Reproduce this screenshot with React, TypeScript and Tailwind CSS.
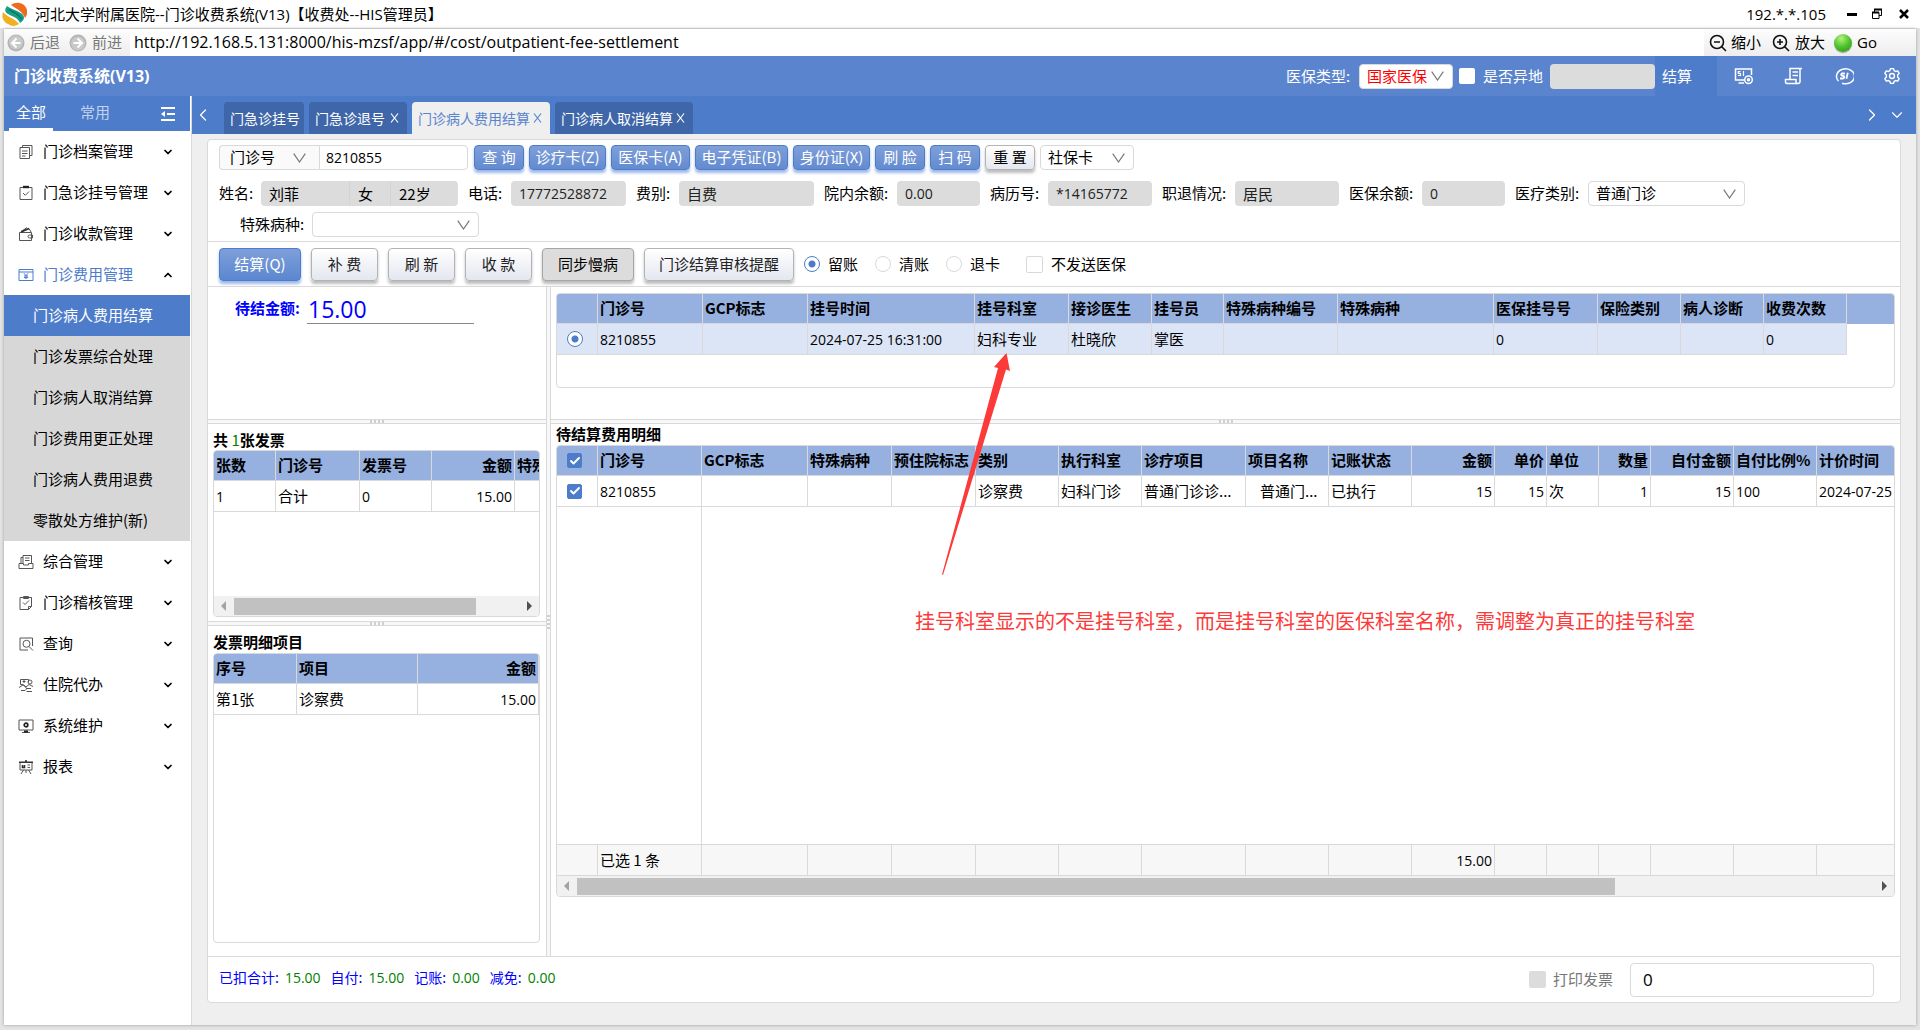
import { useState } from 'react'
import type { ReactNode } from 'react'
import clsx from 'clsx'
import { Check, ChevronDown, ChevronLeft, ChevronRight, ChevronUp } from 'lucide-react'

interface Column {
  title: ReactNode
  width: string
  value?: ReactNode
  right?: boolean
  total?: string
}

const num = "font-['Open_Sans','Noto_Sans_CJK_SC',sans-serif] text-[14px]"

function MenuIcon({ children }: { children: ReactNode }) {
  return (
    <svg viewBox="0 0 16 16" className="size-4 shrink-0" fill="none" stroke="currentColor" strokeWidth="1">
      {children}
    </svg>
  )
}

const icons: Record<string, ReactNode> = {
  archive: (
    <MenuIcon>
      <path d="M4.500 3.500v-2h9.500v10h-2M2 3.500h9.500v11H2zM4 7h5.500M4 9.500h5.500M4 12h3.500" />
    </MenuIcon>
  ),
  clipboard: (
    <MenuIcon>
      <path d="M2 2.500h12v12H2zM5 8l2.300 2.300L11 6.500" />
      <path d="M5 2h6" strokeWidth="2.400" stroke="#222" />
    </MenuIcon>
  ),
  wallet: (
    <MenuIcon>
      <path d="M1.500 6.500h12v8h-12zM3 6l8-3.500L13 6M4 5l5-3.500M14.500 9h-3a1.500 1.500 0 0 0 0 3h3z" />
      <path d="M3 5.800 11 2.500" strokeWidth="1.800" stroke="#333" />
    </MenuIcon>
  ),
  fee: (
    <MenuIcon>
      <path d="M1 2.500h14v11H1zM1 5h14M6 6.300l2 2.400 2-2.400M8 8.700V12M6 9h4M6 10.600h4" />
    </MenuIcon>
  ),
  tray: (
    <MenuIcon>
      <path d="M5 9V1.500h8.500V9M3 9V3.500h2M1 9.500h4.500v1.500h5V9.500H15v5H1zM7 4h4.500M7 6.500h4.500" />
    </MenuIcon>
  ),
  audit: (
    <MenuIcon>
      <path d="M2 2.500h11.500v9l-3 3H2zM10.500 14.500v-3h3M5 7.500l2 2 4-4" />
      <path d="M5.500 1.500h5v2h-5z" />
    </MenuIcon>
  ),
  search: (
    <MenuIcon>
      <path d="M10 14H2V2h12.500v8" />
      <circle cx="8.500" cy="7.800" r="3.500" />
      <path d="m11 10.500 4 4" />
    </MenuIcon>
  ),
  agent: (
    <MenuIcon>
      <path d="M2.500 2.500h8v3M2.500 2.500v5h3M4.500 4.500h3M6 3v3" />
      <circle cx="12" cy="5" r="2" />
      <path d="M1 10.500 5 8l3 2 3-2.500 4 2M3 13.500h4l2-2h4M6 8l3 4M8.500 14.500h5.500" />
    </MenuIcon>
  ),
  system: (
    <MenuIcon>
      <path d="M1 2h14v10H1zM4 14.500h8" />
      <circle cx="8" cy="7" r="1.800" strokeWidth="1.700" stroke="#222" />
      <path d="M6 13.500h4" strokeWidth="2" stroke="#222" />
    </MenuIcon>
  ),
  report: (
    <MenuIcon>
      <path d="M2 3.500h12v7.500H2zM5.500 11 3 15M10.500 11l2.500 4M8 11v3M9.500 6h2.500M9.500 8.500h2.500" />
      <path d="M1 3.200h14M8 1v2M4.500 6v2.500h2V6" strokeWidth="1.600" stroke="#333" />
    </MenuIcon>
  ),
}

const menu = [
  { label: '门诊档案管理', icon: 'archive' },
  { label: '门急诊挂号管理', icon: 'clipboard' },
  { label: '门诊收款管理', icon: 'wallet' },
  {
    label: '门诊费用管理',
    icon: 'fee',
    children: [
      '门诊病人费用结算',
      '门诊发票综合处理',
      '门诊病人取消结算',
      '门诊费用更正处理',
      '门诊病人费用退费',
      '零散处方维护(新)',
    ],
  },
  { label: '综合管理', icon: 'tray' },
  { label: '门诊稽核管理', icon: 'audit' },
  { label: '查询', icon: 'search' },
  { label: '住院代办', icon: 'agent' },
  { label: '系统维护', icon: 'system' },
  { label: '报表', icon: 'report' },
]

const tabs = [
  { label: '门急诊挂号', width: 'w-[80px]', closable: false },
  { label: '门急诊退号', width: 'w-[98px]', closable: true },
  { label: '门诊病人费用结算', width: 'w-[138px]', closable: true },
  { label: '门诊病人取消结算', width: 'w-[138px]', closable: true },
]

const registerColumns: Column[] = [
  { title: '', width: 'w-[41px]', value: <Radio name="register" label="选择 8210855" defaultChecked /> },
  { title: '门诊号', width: 'w-[105px]', value: <span className={num}>8210855</span> },
  { title: 'GCP标志', width: 'w-[105px]' },
  { title: '挂号时间', width: 'w-[167px]', value: <span className={num}>2024-07-25 16:31:00</span> },
  { title: '挂号科室', width: 'w-[94px]', value: '妇科专业' },
  { title: '接诊医生', width: 'w-[83px]', value: '杜晓欣' },
  { title: '挂号员', width: 'w-[72px]', value: '掌医' },
  { title: '特殊病种编号', width: 'w-[114px]' },
  { title: '特殊病种', width: 'w-[156px]' },
  { title: '医保挂号号', width: 'w-[104px]', value: <span className={num}>0</span> },
  { title: '保险类别', width: 'w-[83px]' },
  { title: '病人诊断', width: 'w-[83px]' },
  { title: '收费次数', width: 'w-[83px]', value: <span className={num}>0</span> },
]

const detailColumns: Column[] = [
  { title: <Tick label="全选" />, width: 'w-[41px]', value: <Tick label="选择明细" /> },
  { title: '门诊号', width: 'w-[104px]', value: <span className={num}>8210855</span>, total: '已选 1 条' },
  { title: 'GCP标志', width: 'w-[106px]' },
  { title: '特殊病种', width: 'w-[84px]' },
  { title: '预住院标志', width: 'w-[84px]' },
  { title: '类别', width: 'w-[83px]', value: '诊察费' },
  { title: '执行科室', width: 'w-[83px]', value: '妇科门诊' },
  { title: '诊疗项目', width: 'w-[104px]', value: '普通门诊诊...' },
  { title: '项目名称', width: 'w-[83px]', value: <span className="pl-3">普通门...</span> },
  { title: '记账状态', width: 'w-[83px]', value: '已执行' },
  { title: '金额', width: 'w-[83px]', value: <span className={num}>15</span>, right: true, total: '15.00' },
  { title: '单价', width: 'w-[52px]', value: <span className={num}>15</span>, right: true },
  { title: '单位', width: 'w-[52px]', value: '次' },
  { title: '数量', width: 'w-[52px]', value: <span className={num}>1</span>, right: true },
  { title: '自付金额', width: 'w-[83px]', value: <span className={num}>15</span>, right: true },
  { title: '自付比例%', width: 'w-[83px]', value: <span className={num}>100</span> },
  { title: '计价时间', width: 'w-[156px]', value: <span className={num}>2024-07-25</span> },
]

const invoiceColumns: Column[] = [
  { title: '张数', width: 'w-[62px]', value: <span className={num}>1</span> },
  { title: '门诊号', width: 'w-[84px]', value: '合计' },
  { title: '发票号', width: 'w-[72px]', value: <span className={num}>0</span> },
  { title: '金额', width: 'w-[83px]', value: <span className={num}>15.00</span>, right: true },
  { title: '特殊病种', width: 'w-[90px]' },
]

const itemColumns: Column[] = [
  { title: '序号', width: 'w-[83px]', value: '第1张' },
  { title: '项目', width: 'w-[121px]', value: '诊察费' },
  { title: '金额', width: 'w-[121px]', value: <span className={num}>15.00</span>, right: true },
]

function Radio({ name, label, defaultChecked }: { name: string; label?: string; defaultChecked?: boolean }) {
  return (
    <input
      type="radio"
      name={name}
      aria-label={label}
      defaultChecked={defaultChecked}
      className="block size-4 shrink-0 appearance-none rounded-full border border-[#d9d9d9] bg-white checked:border-[#4d7cca] checked:bg-[radial-gradient(circle,#4d7cca_3px,white_4px)]"
    />
  )
}

function Tick({ label }: { label: string }) {
  return (
    <span className="relative block size-[15px]">
      <input
        type="checkbox"
        aria-label={label}
        defaultChecked
        className="peer block size-[15px] appearance-none rounded-xs border border-[#d9d9d9] bg-white checked:border-[#4d7cca] checked:bg-[#4d7cca]"
      />
      <Check
        className="pointer-events-none absolute inset-0 m-auto hidden size-3 text-white peer-checked:block"
        strokeWidth={4}
      />
    </span>
  )
}

function Chevron({ className }: { className?: string }) {
  return (
    <svg
      viewBox="0 0 13 10"
      className={clsx('pointer-events-none absolute inset-y-0 my-auto h-[10px] w-[13px] text-[#777]', className)}
      fill="none"
      stroke="currentColor"
      strokeWidth="1.2"
    >
      <path d="M.7.7 6.500 9 12.300.7" />
    </svg>
  )
}

interface PickProps {
  id: string
  label?: string
  value: string
  className?: string
  boxClass?: string
  chevronClass?: string
}

function Pick({ id, label, value, className, boxClass = 'rounded bg-white pl-[7px]', chevronClass = 'right-[9px]' }: PickProps) {
  return (
    <span className={clsx('relative block h-[25px] shrink-0', className)}>
      <select
        id={id}
        aria-label={label}
        className={clsx('h-full w-full appearance-none border border-[#d9d9d9] outline-none', boxClass)}
      >
        <option>{value}</option>
      </select>
      <Chevron className={chevronClass} />
    </span>
  )
}

function Field({ id, label, value, labelWidth, width }: Record<'id' | 'label' | 'value' | 'labelWidth' | 'width', string>) {
  return (
    <div className="flex shrink-0 items-center">
      <label htmlFor={id} className={clsx('shrink-0', labelWidth)}>
        {label}:
      </label>
      <input
        id={id}
        readOnly
        defaultValue={value}
        className={clsx('h-[25px] rounded bg-[#dcdcdc] px-2 text-[#222] outline-none', width, /^[\d*.]+$/.test(value) && num)}
      />
    </div>
  )
}

function QueryButton({ children, width, plain }: { children: ReactNode; width: string; plain?: boolean }) {
  return (
    <button
      className={clsx(
        'flex h-[25px] shrink-0 items-center justify-center rounded border whitespace-nowrap',
        width,
        plain
          ? 'border-[#b3b3b3] bg-linear-to-b from-white to-[#e4e7f0] shadow-[0_3px_3px_#bdbdbd]'
          : 'border-[#4d7cca] bg-linear-to-b from-[#7f9fd9] to-[#638bd0] text-white shadow-[0_3px_3px_#9db9ea]',
      )}
    >
      {children}
    </button>
  )
}

const actionTones = {
  primary: 'border-[#4d7cca] bg-linear-to-b from-[#7f9fd9] to-[#5b87d0] text-white shadow-[0_3px_3px_#9db9ea]',
  plain: 'border-[#b3b3b3] bg-linear-to-b from-white to-[#e4e7f0] text-[#222] shadow-[0_3px_3px_#bdbdbd]',
  gray: 'border-[#a6a6a6] bg-[#dcdcdc] text-black shadow-[0_3px_3px_#bdbdbd]',
}

function ActionButton({ children, width, tone = 'plain' }: { children: ReactNode; width: string; tone?: keyof typeof actionTones }) {
  return (
    <button
      className={clsx(
        'flex h-[33px] shrink-0 items-center justify-center rounded border whitespace-nowrap',
        width,
        actionTones[tone],
      )}
    >
      {children}
    </button>
  )
}

function DataTable({ columns, selected }: { columns: Column[]; selected?: boolean }) {
  return (
    <table className="w-0 table-fixed border-separate border-spacing-0">
      <thead>
        <tr className="h-[30px] bg-[#96b1e0]">
          {columns.map((col, i) => (
            <th
              key={i}
              className={clsx(
                'overflow-hidden border-r border-b border-[#d9d9d9] font-bold whitespace-nowrap',
                col.width,
                col.right ? 'pr-[2px] text-right' : 'pl-[2px] text-left',
              )}
            >
              {typeof col.title === 'string' ? col.title : <div className="pl-2">{col.title}</div>}
            </th>
          ))}
        </tr>
      </thead>
      <tbody>
        <tr className={clsx('h-[31px]', selected ? 'bg-[#dbe5f6]' : 'bg-white')}>
          {columns.map((col, i) => (
            <td
              key={i}
              className={clsx(
                'overflow-hidden border-r border-b border-[#d9d9d9] whitespace-nowrap',
                col.right ? 'pr-[2px] text-right' : 'pl-[2px] text-left',
              )}
            >
              {col.width === 'w-[41px]' ? <div className="pl-2">{col.value}</div> : col.value}
            </td>
          ))}
        </tr>
      </tbody>
    </table>
  )
}

function ScrollBar({ thumb }: { thumb: string }) {
  return (
    <div className="flex h-5 shrink-0 items-center bg-[#f1f1f1] px-[7px]">
      <span className="border-y-[5px] border-r-[5px] border-y-transparent border-r-[#a3a3a3]" />
      <div className="flex-1 px-2">
        <div className={clsx('h-[17px] bg-[#c1c1c1]', thumb)} />
      </div>
      <span className="border-y-[5px] border-l-[5px] border-y-transparent border-l-[#505050]" />
    </div>
  )
}

function Splitter({ vertical }: { vertical?: boolean }) {
  return (
    <div
      className={clsx(
        'flex shrink-0 items-center justify-center gap-[2px] border-[#d9d9d9] bg-[#f8f8f8]',
        vertical ? 'w-[5px] flex-col border-x' : 'h-[5px] border-y',
      )}
    >
      {[0, 1, 2, 3].map((i) => (
        <span key={i} className={clsx('bg-[#d0d0d0]', vertical ? 'h-[2px] w-[3px]' : 'h-[3px] w-[2px]')} />
      ))}
    </div>
  )
}

function TitleBar() {
  return (
    <header className="flex h-[29px] shrink-0 items-center border-b border-[#e3e3e3] bg-white pr-2.5 pl-px font-['Open_Sans','Noto_Sans_CJK_SC',sans-serif]">
      <svg viewBox="0 0 26 24" className="h-6 w-[26px] shrink-0">
        <path d="M10 3c4-3 10-3 14 1 3 4 3 8 0 12-2-6-8-9-14-13z" fill="#ee6a20" />
        <path d="M6 4C3 8 4 10.500 8 12.500c5 2.500 9 3.500 11 8.500 4-3 5-5 3-8C19 9 10 7.500 6 4z" fill="#12a086" />
        <path d="M8 7.500c4 3 11 4.500 12.500 10" fill="none" stroke="#0c7466" strokeWidth="1.500" />
        <path d="M2 10c-2 6 1 10 5 12 4 3 8 2 11 0-3-5-12-7-16-12z" fill="#efb024" />
      </svg>
      <h1 className="ml-2 text-[15px]">河北大学附属医院--门诊收费系统(V13)【收费处--HIS管理员】</h1>
      <span className="ml-auto text-[15px]">192.*.*.105</span>
      <button aria-label="最小化" className="ml-[21px] flex h-4 w-[10px] items-center">
        <span className="h-[3px] w-full bg-black" />
      </button>
      <button aria-label="还原" className="ml-[14px] w-3">
        <svg viewBox="0 0 12 12" className="size-3" fill="none" stroke="#000">
          <path d="M3.500 4V1.500h7v6H8" />
          <path d="M1.500 4.500H8v6H1.500z" />
          <path d="M3 1.500h8M1 4.500h7" strokeWidth="2" />
        </svg>
      </button>
      <button aria-label="关闭" className="ml-[15px] w-3">
        <svg viewBox="0 0 12 12" className="size-3" stroke="#000" strokeWidth="2.500">
          <path d="m2 2 8 8M10 2l-8 8" />
        </svg>
      </button>
    </header>
  )
}

function RoundArrow({ flip }: { flip?: boolean }) {
  return (
    <svg viewBox="0 0 18 18" className={clsx('size-[18px]', flip && 'rotate-180')}>
      <circle cx="9" cy="9" r="8.500" fill="#b4b4b4" />
      <circle cx="9" cy="8.500" r="7" fill="#c9c9c9" />
      <path d="M9.500 4.500 5 9l4.500 4.500M5 9h8.500" fill="none" stroke="#fff" strokeWidth="2" />
    </svg>
  )
}

function Magnifier({ plus }: { plus?: boolean }) {
  return (
    <svg viewBox="0 0 18 18" className="size-[18px]" fill="none" stroke="#111" strokeWidth="1.600">
      <circle cx="8" cy="8" r="6.500" />
      <path d="m12.500 12.500 4.500 4.500M5 8h6" />
      {plus && <path d="M8 5v6" />}
    </svg>
  )
}

function AddressBar() {
  return (
    <div className="flex h-[27px] shrink-0 items-center bg-white text-[15px]">
      <div className="flex h-full items-center bg-linear-to-b from-[#fdfdfd] to-[#ededed] pr-2 pl-[3px] text-[#777]">
        <button className="flex items-center gap-[5px]">
          <RoundArrow />
          后退
        </button>
        <button className="ml-[9px] flex items-center gap-[5px]">
          <RoundArrow flip />
          前进
        </button>
      </div>
      <input
        aria-label="地址"
        defaultValue="http://192.168.5.131:8000/his-mzsf/app/#/cost/outpatient-fee-settlement"
        className="h-full min-w-0 flex-1 px-1 pb-[2px] font-['Open_Sans',sans-serif] text-[16px] outline-none"
      />
      <div className="flex h-full w-[212px] shrink-0 items-center bg-linear-to-b from-[#fdfdfd] to-[#ededed] pl-[5px]">
        <button className="flex items-center gap-1">
          <Magnifier />
          缩小
        </button>
        <button className="ml-[11px] flex items-center gap-[5px]">
          <Magnifier plus />
          放大
        </button>
        <button className="ml-[9px] flex items-center gap-[5px] font-['Open_Sans',sans-serif]">
          <span className="size-[18px] rounded-full bg-[radial-gradient(circle_at_40%_25%,#b5f07c,#4bc22c_50%,#2d8a17)] shadow-[0_1px_1px_#999]" />
          Go
        </button>
      </div>
    </div>
  )
}

function AppHeader() {
  return (
    <div className="flex h-10 shrink-0 items-center bg-[#5a85ce] text-[15px] text-white">
      <h2 className="pl-[10px] font-['Open_Sans','Noto_Sans_CJK_SC',sans-serif] text-[16px] font-bold">
        门诊收费系统(V13)
      </h2>
      <label htmlFor="insurance" className="ml-auto w-[73px]">
        医保类型:
      </label>
      <Pick id="insurance" value="国家医保" className="w-[94px] text-[#f00]" />
      <input
        id="remote"
        type="checkbox"
        className="ml-[6px] size-4 appearance-none rounded-xs bg-white checked:bg-[#9db9ea]"
      />
      <label htmlFor="remote" className="ml-2">
        是否异地
      </label>
      <input aria-label="异地地区" readOnly className="ml-[7px] h-[25px] w-[105px] rounded bg-[#dcdcdc]" />
      <button className="h-full w-[62px] bg-[#4d7cca] pl-[7px] text-left">结算</button>
      <div className="flex items-center gap-[30px] pr-4 pl-[17px]">
        <button aria-label="医保目录">
          <svg viewBox="0 0 20 20" className="size-5" fill="none" stroke="#fff" strokeWidth="1.500">
            <path d="M10 14H1.500V3h16v6M4.500 17H10" />
            <path d="M6.500 5.700H4.300v1.800h2.200v2H4M9.500 5v5" strokeWidth="1.200" />
            <circle cx="14.500" cy="13.800" r="3.800" />
            <circle cx="14.500" cy="13.800" r="1" />
          </svg>
        </button>
        <button aria-label="票据">
          <svg viewBox="0 0 20 20" className="size-5" fill="none" stroke="#fff" strokeWidth="1.500">
            <path d="M6 13V2.500h12M16 2.500V16a2 2 0 0 1-2 1.500H3a1.500 1.500 0 0 1-1.500-1.500v-2.500H12V16a2 2 0 0 0 2 1.500M8.500 6H14M8.500 9.500H14" />
          </svg>
        </button>
        <button aria-label="医保">
          <svg viewBox="0 0 20 20" className="size-5" fill="none" stroke="#fff" strokeWidth="1.500">
            <path d="M4.500 15A9 7.500 0 1 1 8 17.200" />
            <path d="M10.800 7.500H8.300c-1.300 0-1.600 2 0 2.300h1c1.500.3 1 2.700-.5 2.700H6M13.800 6.800l-1.400 6" strokeWidth="1.800" />
          </svg>
        </button>
        <button aria-label="设置">
          <svg viewBox="1.500 1.500 17 17" className="size-4" fill="none" stroke="#fff" strokeWidth="1.500" strokeLinejoin="round">
            <path d="M8.500 2h3l.7 2.300 1.600.9 2.300-.6 1.500 2.600L16 9v2l1.600 1.800-1.500 2.600-2.300-.6-1.600.9-.7 2.300h-3l-.7-2.300-1.600-.9-2.300.6-1.500-2.600L4 11V9L2.400 7.200l1.500-2.600 2.300.6 1.600-.9z" />
            <circle cx="10" cy="10" r="2.600" />
          </svg>
        </button>
      </div>
    </div>
  )
}

function Sidebar() {
  const [open, setOpen] = useState('门诊费用管理')

  return (
    <aside className="flex w-[188px] shrink-0 flex-col border-r border-[#d9d9d9] bg-white pr-px text-[15px]">
      <div className="flex h-[35px] shrink-0 bg-[#4d7cca] pl-[5px] text-white">
        <button className="w-11 border-b-[3px] border-white">全部</button>
        <button className="ml-5 w-11 border-b-[3px] border-transparent text-[#c3d3ee]">常用</button>
        <button aria-label="收起菜单" className="mr-[14px] ml-auto">
          <svg viewBox="0 0 16 14" className="h-[14px] w-4" stroke="#fff" strokeWidth="2">
            <path d="M1 1h14M7 7h8M1 13h14" />
            <path d="M5 4 1 7l4 3z" fill="#fff" stroke="none" />
          </svg>
        </button>
      </div>
      <nav>
        {menu.map((item) => {
          const active = !!item.children && open === item.label
          return (
            <div key={item.label}>
              <button
                onClick={() => setOpen(active ? '' : item.label)}
                className={clsx('flex h-[41px] w-full items-center pr-4 pl-[14px]', active ? 'text-[#4d7cca]' : 'text-black')}
              >
                <span className={active ? '' : 'text-[#555]'}>{icons[item.icon]}</span>
                <span className="ml-[9px]">{item.label}</span>
                {active ? (
                  <ChevronUp className="ml-auto size-3 text-black" strokeWidth={3.5} />
                ) : (
                  <ChevronDown className="ml-auto size-3 text-black" strokeWidth={3.5} />
                )}
              </button>
              {active && (
                <div className="bg-[#d7d7d7]">
                  {item.children?.map((child, i) => (
                    <button
                      key={child}
                      className={clsx('block h-[41px] w-full pl-[29px] text-left', i === 0 && 'bg-[#4d7cca] text-white')}
                    >
                      {child}
                    </button>
                  ))}
                </div>
              )}
            </div>
          )
        })}
      </nav>
    </aside>
  )
}

function TabBar() {
  return (
    <div className="flex h-[38px] shrink-0 items-end bg-[#4d7cca] text-[14px] text-white">
      <button aria-label="向左" className="mr-[11px] ml-px flex h-[38px] w-5 items-center justify-center">
        <ChevronLeft className="size-5" strokeWidth={1.5} />
      </button>
      <div className="flex gap-[5px]">
        {tabs.map((tab, i) => (
          <button
            key={tab.label}
            className={clsx(
              'flex h-8 items-center justify-between rounded-t px-[6px] whitespace-nowrap',
              tab.width,
              i === 2 ? 'bg-[#efefef] text-[#5a85ce]' : 'bg-[#3e66a8]',
            )}
          >
            {tab.label}
            {tab.closable && (
              <svg viewBox="0 0 9 10" className="mr-[2px] h-[10px] w-[9px]" stroke="currentColor" strokeWidth="1.200">
                <path d="m1 .5 7 9M8 .5l-7 9" />
              </svg>
            )}
          </button>
        ))}
      </div>
      <div className="ml-auto flex h-[38px] items-center gap-[6px] pr-[10px]">
        <ChevronRight className="size-5" strokeWidth={1.5} />
        <ChevronDown className="size-[18px]" strokeWidth={1.5} />
      </div>
    </div>
  )
}

function QueryForm() {
  return (
    <form className="shrink-0 border-b border-[#d9d9d9] pt-[5px] pb-1 pl-[11px]" onSubmit={(e) => e.preventDefault()}>
      <div className="flex items-center gap-[5px]">
        <div className="mr-px flex">
          <Pick
            id="cardKind"
            label="号码类型"
            value="门诊号"
            className="w-[100px]"
            boxClass="rounded-l border-r-0 bg-[#fafafa] pl-[10px]"
            chevronClass="right-[13px]"
          />
          <input
            aria-label="门诊号"
            defaultValue="8210855"
            className={clsx('h-[25px] w-[149px] rounded-r border border-[#d9d9d9] px-[6px] outline-none', num)}
          />
        </div>
        <QueryButton width="w-[50px]">查 询</QueryButton>
        <QueryButton width="w-[77px]">诊疗卡(Z)</QueryButton>
        <QueryButton width="w-[79px]">医保卡(A)</QueryButton>
        <QueryButton width="w-[93px]">电子凭证(B)</QueryButton>
        <QueryButton width="w-[77px]">身份证(X)</QueryButton>
        <QueryButton width="w-[50px]">刷 脸</QueryButton>
        <QueryButton width="w-[50px]">扫 码</QueryButton>
        <QueryButton width="w-[50px]" plain>
          重 置
        </QueryButton>
        <Pick id="social" label="卡类型" value="社保卡" className="w-[94px]" />
      </div>
      <div className="mt-[11px] flex items-center gap-[10px]">
        <div className="flex items-center">
          <label htmlFor="name" className="w-[42px]">
            姓名:
          </label>
          <div className="flex divide-x divide-[#d4d4d4] overflow-hidden rounded bg-[#dcdcdc]">
            <input id="name" readOnly defaultValue="刘菲" className="h-[25px] w-[89px] px-2 outline-none" />
            <input aria-label="性别" readOnly defaultValue="女" className="h-[25px] w-[41px] px-2 outline-none" />
            <input aria-label="年龄" readOnly defaultValue="22岁" className="h-[25px] w-[67px] px-2 outline-none" />
          </div>
        </div>
        <Field id="phone" label="电话" value="17772528872" labelWidth="w-[43px]" width="w-[115px]" />
        <Field id="feeKind" label="费别" value="自费" labelWidth="w-[43px]" width="w-[135px]" />
        <Field id="balance" label="院内余额" value="0.00" labelWidth="w-[73px]" width="w-[83px]" />
        <Field id="record" label="病历号" value="*14165772" labelWidth="w-[58px]" width="w-[104px]" />
        <Field id="retire" label="职退情况" value="居民" labelWidth="w-[73px]" width="w-[104px]" />
        <Field id="siBalance" label="医保余额" value="0" labelWidth="w-[73px]" width="w-[83px]" />
        <div className="flex items-center">
          <label htmlFor="medical" className="w-[73px]">
            医疗类别:
          </label>
          <Pick id="medical" value="普通门诊" className="w-[157px]" />
        </div>
      </div>
      <div className="mt-[6px] ml-[21px] flex items-center">
        <label htmlFor="disease" className="w-[72px]">
          特殊病种:
        </label>
        <Pick id="disease" value="" className="w-[167px]" />
      </div>
    </form>
  )
}

function ActionBar() {
  return (
    <div className="flex h-[45px] shrink-0 items-center gap-[10px] border-b border-[#d9d9d9] pl-[11px]">
      <ActionButton width="w-[82px]" tone="primary">
        结算(Q)
      </ActionButton>
      <ActionButton width="w-[67px]">补 费</ActionButton>
      <ActionButton width="w-[67px]">刷 新</ActionButton>
      <ActionButton width="w-[67px]">收 款</ActionButton>
      <ActionButton width="w-[92px]" tone="gray">
        同步慢病
      </ActionButton>
      <ActionButton width="w-[150px]">门诊结算审核提醒</ActionButton>
      <div className="flex gap-[17px]">
        {['留账', '清账', '退卡'].map((label, i) => (
          <label key={label} className="flex items-center gap-2">
            <Radio name="account" defaultChecked={i === 0} />
            {label}
          </label>
        ))}
      </div>
      <label className="ml-4 flex items-center gap-2">
        <input
          type="checkbox"
          className="size-[17px] appearance-none rounded-xs border border-[#d9d9d9] bg-white checked:bg-[#4d7cca]"
        />
        不发送医保
      </label>
    </div>
  )
}

function InvoicePanel() {
  return (
    <div className="flex w-[338px] shrink-0 flex-col">
      <div className="flex h-[132px] shrink-0 items-start pt-2 pl-[27px] text-[#00f]">
        <label htmlFor="amount" className="mt-[2px] w-[72px] font-bold">
          待结金额:
        </label>
        <input
          id="amount"
          readOnly
          defaultValue="15.00"
          className="h-[29px] w-[167px] border-b border-[#888] px-px font-['Open_Sans',sans-serif] text-[23px] outline-none"
        />
      </div>
      <Splitter />
      <section className="flex h-[197px] shrink-0 flex-col pr-[6px] pb-1 pl-[5px]">
        <h3 className="pt-[5px] leading-[21px] font-bold">
          共 <span className="font-normal text-[#008000]">1</span>张发票
        </h3>
        <div className="flex flex-1 flex-col overflow-hidden rounded border border-[#d9d9d9]">
          <DataTable columns={invoiceColumns} />
          <div className="flex-1" />
          <ScrollBar thumb="w-[242px]" />
        </div>
      </section>
      <Splitter />
      <section className="flex flex-1 flex-col pr-[6px] pb-[13px] pl-[5px]">
        <h3 className="pt-[5px] leading-[22px] font-bold">发票明细项目</h3>
        <div className="flex-1 overflow-hidden rounded border border-[#d9d9d9]">
          <DataTable columns={itemColumns} />
        </div>
      </section>
    </div>
  )
}

function DetailPanel() {
  return (
    <div className="flex min-w-0 flex-1 flex-col">
      <div className="h-[132px] shrink-0 px-[5px] pt-[6px]">
        <div className="h-[95px] overflow-hidden rounded border border-[#d9d9d9]">
          <div className="bg-[linear-gradient(#96b1e0_30px,white_30px)]">
            <DataTable columns={registerColumns} selected />
          </div>
        </div>
      </div>
      <Splitter />
      <section className="flex flex-1 flex-col px-[5px] pb-[59px]">
        <h3 className="pb-[2px] leading-[19px] font-bold">待结算费用明细</h3>
        <div className="flex flex-1 flex-col overflow-hidden rounded border border-[#d9d9d9]">
          <DataTable columns={detailColumns} />
          <div className="w-[145px] flex-1 border-r border-[#d9d9d9]" />
          <div className="flex h-8 shrink-0 border-y border-[#d9d9d9] bg-[#f7f7f7]">
            {detailColumns.map((col, i) => (
              <div
                key={i}
                className={clsx(
                  'flex shrink-0 items-center border-r border-[#d9d9d9] px-[2px]',
                  col.width,
                  col.right && 'justify-end',
                  col.right && num,
                )}
              >
                {col.total}
              </div>
            ))}
          </div>
          <ScrollBar thumb="w-4/5" />
        </div>
      </section>
    </div>
  )
}

function TotalsBar() {
  const totals = [
    ['已扣合计', '15.00'],
    ['自付', '15.00'],
    ['记账', '0.00'],
    ['减免', '0.00'],
  ]
  return (
    <footer className="flex h-[46px] shrink-0 items-center border-t border-[#d9d9d9] pr-[26px] pl-[11px]">
      <dl className="flex gap-[10px] pb-1 text-[14px]">
        {totals.map(([label, value]) => (
          <div key={label} className="flex items-center gap-[6px]">
            <dt className="text-[#00f]">{label}:</dt>
            <dd className={clsx('text-[#008000]', num)}>{value}</dd>
          </div>
        ))}
      </dl>
      <label className="mr-[17px] ml-auto flex items-center gap-[7px] text-[#777]">
        <input type="checkbox" disabled className="size-[17px] appearance-none rounded-xs bg-[#dcdcdc]" />
        打印发票
      </label>
      <input
        aria-label="发票号"
        defaultValue="0"
        className="h-[34px] w-[244px] rounded border border-[#d9d9d9] px-3 font-['Open_Sans',sans-serif] text-[17px] outline-none"
      />
    </footer>
  )
}

// red note that sits above the fee detail grid
function Annotation() {
  return (
    <div className="pointer-events-none absolute top-[353px] left-[915px] text-[#fc3a3a]">
      <svg viewBox="0 0 100 224" className="ml-[26px] h-[224px] w-[100px]" fill="currentColor">
        <path d="M65.500 0 69 18l-4-1.500L2 222l-1-.5L57 15l-4-1z" />
      </svg>
      <p className="mt-[29px] text-[20px] leading-[30px] whitespace-nowrap">
        挂号科室显示的不是挂号科室，而是挂号科室的医保科室名称，需调整为真正的挂号科室
      </p>
    </div>
  )
}

export default function App() {
  return (
    <div className="relative flex h-screen min-h-[900px] flex-col overflow-hidden bg-[#e4e4e4] font-['Noto_Sans_CJK_SC',sans-serif] text-black">
      <TitleBar />
      <div className="mx-1 mb-[5px] flex min-h-0 flex-1 flex-col shadow-[0_0_3px_#999]">
        <AddressBar />
        <AppHeader />
        <div className="flex min-h-0 flex-1">
          <Sidebar />
          <main className="flex min-w-0 flex-1 flex-col bg-[#efefef] text-[15px]">
            <TabBar />
            <div className="mx-[15px] mt-[5px] mb-[22px] flex min-h-0 flex-1 flex-col rounded border border-[#d9d9d9] bg-white">
              <QueryForm />
              <ActionBar />
              <div className="flex min-h-0 flex-1">
                <InvoicePanel />
                <Splitter vertical />
                <DetailPanel />
              </div>
              <TotalsBar />
            </div>
          </main>
        </div>
      </div>
      <Annotation />
    </div>
  )
}
